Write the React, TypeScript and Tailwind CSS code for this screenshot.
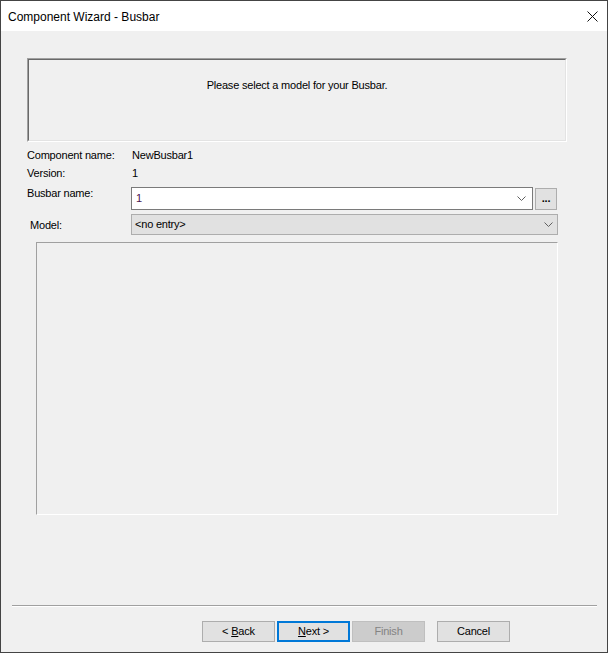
import React from "react";

const Chevron = ({ color = "#606060" }: { color?: string }) => (
  <svg width="9" height="6" viewBox="0 0 9 6" className="shrink-0">
    <polyline points="0.5,0.5 4.5,4.5 8.5,0.5" fill="none" stroke={color} strokeWidth="1" />
  </svg>
);

interface WizardButtonProps {
  label: React.ReactNode;
  focused?: boolean;
  disabled?: boolean;
}

const WizardButton: React.FC<WizardButtonProps> = ({ label, focused, disabled }) => {
  let cls = "w-[73px] h-[21px] flex items-center justify-center text-[11px] ";
  if (disabled) cls += "bg-[#cccccc] border border-[#bfbfbf] text-[#838383]";
  else if (focused) cls += "bg-[#e1e1e1] border-2 border-[#0078d7] text-black";
  else cls += "bg-[#e1e1e1] border border-[#adadad] text-black";
  return <div className={cls}>{label}</div>;
};

export default function App() {
  return (
    <div
      className="w-[608px] h-[653px] flex flex-col border border-[#444444] bg-[#f0f0f0] text-black"
      style={{ fontFamily: '"Liberation Sans", Arial, sans-serif' }}
    >
      {/* title bar */}
      <div className="h-[30px] bg-white flex items-center justify-between pl-[7px] pr-[9px] shrink-0">
        <span className="text-[12px] leading-none pt-[1px]">Component Wizard - Busbar</span>
        <svg width="11" height="11" viewBox="0 0 11 11">
          <path d="M0.5 0.5 L10.5 10.5 M10.5 0.5 L0.5 10.5" stroke="#111" strokeWidth="1" />
        </svg>
      </div>

      <div className="flex flex-col text-[11px] leading-[13px] tracking-[-0.2px]">
        {/* header panel */}
        <div className="ml-[26px] mt-[27px] w-[540px] h-[84px] border-t border-l border-[#a0a0a0] border-r-white border-b-white border-r border-b">
          <div className="w-full h-full border-t border-l border-[#696969] border-r-[#e3e3e3] border-b-[#e3e3e3] border-r border-b flex justify-center pt-[19px]">
            Please select a model for your Busbar.
          </div>
        </div>

        <div className="ml-[26px] mt-[7px] flex h-[13px]">
          <span className="w-[105px]">Component name:</span>
          <span>NewBusbar1</span>
        </div>
        <div className="ml-[26px] mt-[5px] flex h-[13px]">
          <span className="w-[105px]">Version:</span>
          <span>1</span>
        </div>

        <div className="ml-[26px] mt-[7px] flex h-[23px]">
          <span className="w-[104px]">Busbar name:</span>
          <div className="w-[402px] h-[23px] bg-white border border-[#7a7a7a] flex items-center justify-between pl-[4px] pr-[6px]">
            <span className="text-[#4a1250]">1</span>
            <Chevron />
          </div>
          <div className="ml-[2px] mt-[1px] w-[22px] h-[22px] bg-[#e1e1e1] border border-[#adadad] flex items-end justify-center font-bold text-[11px] pb-[4px]">
            ...
          </div>
        </div>

        <div className="ml-[26px] mt-[4px] flex h-[21px]">
          <span className="w-[104px] pl-[3px] pt-[2px] flex items-center">Model:</span>
          <div className="w-[427px] h-[21px] bg-[#e1e1e1] border border-[#adadad] flex items-center justify-between pl-[3px] pr-[4px]">
            <span>&lt;no entry&gt;</span>
            <Chevron />
          </div>
        </div>

        {/* model preview area */}
        <div className="ml-[35px] mt-[7px] w-[522px] h-[273px] border-t border-l border-[#a0a0a0] border-r border-b border-r-white border-b-white" />

        {/* separator */}
        <div className="ml-[11px] mt-[90px] w-[585px] h-[2px] border-t border-[#a0a0a0] border-b border-b-white" />

        {/* buttons */}
        <div className="ml-[201px] mt-[14px] flex">
          <WizardButton label={<span>&lt; <u>B</u>ack</span>} />
          <div className="w-[2px]" />
          <WizardButton focused label={<span><u>N</u>ext &gt;</span>} />
          <div className="w-[2px]" />
          <WizardButton disabled label="Finish" />
          <div className="w-[12px]" />
          <WizardButton label="Cancel" />
        </div>
      </div>
    </div>
  );
}
